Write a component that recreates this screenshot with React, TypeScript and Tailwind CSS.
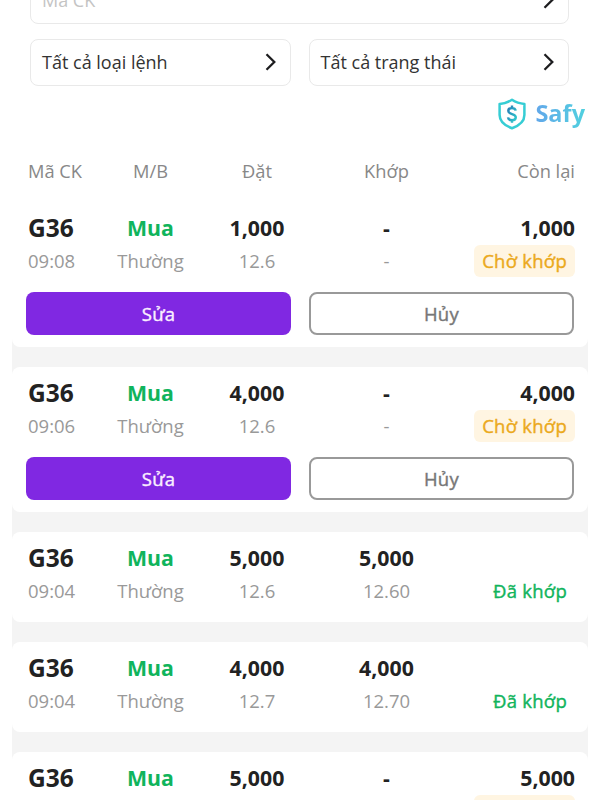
import { clsx } from 'clsx';

type Order = {
  symbol: string;
  time: string;
  quantity: string;
  price: string;
  matched: string;
  matchedPrice: string;
  remaining?: string;
  pending: boolean;
};

const orders: Order[] = [
  { symbol: 'G36', time: '09:08', quantity: '1,000', price: '12.6', matched: '-', matchedPrice: '-', remaining: '1,000', pending: true },
  { symbol: 'G36', time: '09:06', quantity: '4,000', price: '12.6', matched: '-', matchedPrice: '-', remaining: '4,000', pending: true },
  { symbol: 'G36', time: '09:04', quantity: '5,000', price: '12.6', matched: '5,000', matchedPrice: '12.60', pending: false },
  { symbol: 'G36', time: '09:04', quantity: '4,000', price: '12.7', matched: '4,000', matchedPrice: '12.70', pending: false },
  { symbol: 'G36', time: '09:02', quantity: '5,000', price: '12.6', matched: '-', matchedPrice: '-', remaining: '5,000', pending: true },
];

const columns = 'grid grid-cols-[69px_107px_106px_153px_112px] pl-4 text-center';

// Open Sans has no medium cut here, so a thin stroke gives the in-between weight
const medium = '[-webkit-text-stroke:0.4px_currentColor] tracking-[0.25px]';

function Chevron() {
  return (
    <svg className="w-[11px] h-[18px] shrink-0" viewBox="0 0 11 18" fill="none" stroke="#1d1d1f" strokeWidth="2.3">
      <path d="M1.5 1.3 9.3 9l-7.8 7.7" />
    </svg>
  );
}

function SelectBox({ label, muted, className }: { label: string; muted?: boolean; className?: string }) {
  return (
    <button
      className={clsx(
        'flex h-[47px] items-center justify-between rounded-lg border border-[#e9e9e9] bg-white pl-[11px] pr-3.5 pb-px text-[18px]',
        muted ? 'text-[#c4c4c4]' : 'text-[#333]',
        className
      )}
    >
      <span>{label}</span>
      <Chevron />
    </button>
  );
}

function SafyLogo() {
  return (
    <div className="flex items-center gap-[9px]">
      <svg className="w-7 h-8" viewBox="0 0 28 32" fill="none">
        <defs>
          <linearGradient id="dollar" x1="0" y1="0" x2="1" y2="1">
            <stop stopColor="#2878b4" />
            <stop offset="1" stopColor="#2fd0cf" />
          </linearGradient>
        </defs>
        <path
          d="M14 1.8C18 4.5 22 5.6 26.4 5.9V17c0 6.5-4.8 10.5-12.4 13.2C6.4 27.5 1.6 23.5 1.6 17V5.9C6 5.600 10 4.500 14 1.800Z"
          stroke="#36cdd4"
          strokeWidth="2.5"
          strokeLinejoin="round"
        />
        <path
          d="M17.7 12.6c-.3-1.700-1.700-2.500-3.700-2.500-2.200 0-3.700 1.100-3.700 2.900 0 4 7.500 2.100 7.500 6.200 0 1.900-1.600 3-3.800 3s-3.800-1-4-2.800M14 7.600v2.500M14 22.200v2.500"
          stroke="url(#dollar)"
          strokeWidth="2.4"
        />
      </svg>
      <span className="bg-gradient-to-r from-[#62a7ea] to-[#4fd0df] bg-clip-text text-[23.5px] font-bold text-transparent">
        Safy
      </span>
    </div>
  );
}

function OrderCard({ order }: { order: Order }) {
  return (
    <article className={clsx('shrink-0 rounded-lg bg-white pt-2.5 first:rounded-t-none', order.pending ? 'h-[145px]' : 'h-[90px]')}>
      <div className={clsx(columns, 'h-8 text-[21.3px] leading-8 font-bold text-[#222]')}>
        <span className="text-left text-[24.5px] leading-[31px]">{order.symbol}</span>
        <span className="text-[#10b45c]">Mua</span>
        <span>{order.quantity}</span>
        <span>{order.matched}</span>
        <span className="text-right">{order.remaining}</span>
      </div>
      <div className={clsx(columns, 'mt-px h-8 items-center text-[18.5px] text-[#999]')}>
        <span className="text-left">{order.time}</span>
        <span>Thường</span>
        <span>{order.price}</span>
        <span>{order.matchedPrice}</span>
        {order.pending ? (
          <span className={clsx(medium, 'flex h-8 items-center justify-self-end rounded-md bg-[#fff5e2] px-2 whitespace-nowrap text-[#eba91c]')}>
            Chờ khớp
          </span>
        ) : (
          <span className={clsx(medium, 'pr-2 text-right text-[#10b45c]')}>Đã khớp</span>
        )}
      </div>
      {order.pending && (
        <div className={clsx(medium, 'mt-[15px] grid grid-cols-2 gap-[18px] px-3.5 text-[18.5px]')}>
          <button className="h-[43px] rounded-lg bg-[#8028e2] text-[#fbefff]">Sửa</button>
          <button className="h-[43px] rounded-lg border-2 border-[#999] text-[#777]">Hủy</button>
        </div>
      )}
    </article>
  );
}

export default function App() {
  return (
    <main className="flex h-[800px] w-[600px] flex-col overflow-hidden bg-white font-['Open_Sans','Noto_Sans',sans-serif]">
      {/* Filters */}
      <div className="-mt-[23px] grid grid-cols-2 gap-x-[18px] gap-y-[15px] pl-[30px] pr-[31px]">
        <SelectBox label="Mã CK" muted className="col-span-2" />
        <SelectBox label="Tất cả loại lệnh" />
        <SelectBox label="Tất cả trạng thái" />
      </div>

      <div className="mt-3 flex h-8 items-center justify-end pr-[15px]">
        <SafyLogo />
      </div>

      {/* Order list */}
      <section className="mx-3 mt-[26px] flex flex-col">
        <div className={clsx(columns, 'h-[46px] pt-px text-[18.3px] text-[#888]')}>
          <span className="text-left">Mã CK</span>
          <span>M/B</span>
          <span>Đặt</span>
          <span>Khớp</span>
          <span className="text-right">Còn lại</span>
        </div>
        <div className="flex flex-col gap-5 bg-[#f4f4f4]">
          {orders.map((order, index) => (
            <OrderCard key={index} order={order} />
          ))}
        </div>
      </section>
    </main>
  );
}
